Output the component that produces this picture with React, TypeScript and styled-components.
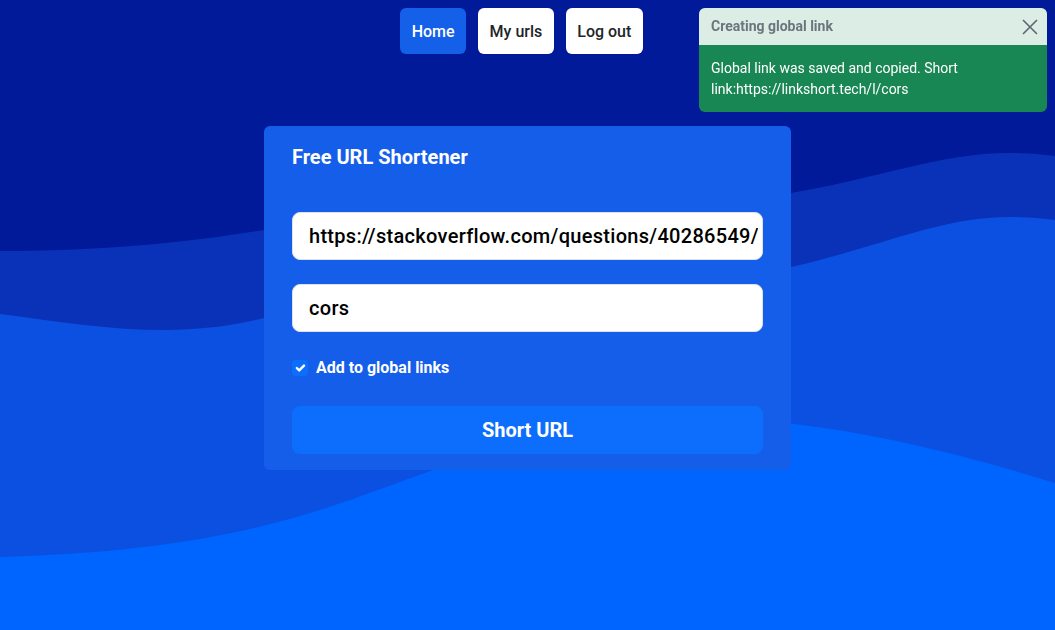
import React from "react";
import styled, { createGlobalStyle } from "styled-components";

const waves = `<svg xmlns="http://www.w3.org/2000/svg" viewBox="0 0 1055 630" preserveAspectRatio="none">
<rect width="1055" height="630" fill="#001a99"/>
<path fill="#0a32b9" d="M0 251 C120 251 200 240 264 230 C500 200 650 215 791 193 C880 178 940 153 1009 153 C1030 153 1045 155 1055 156 L1055 630 L0 630 Z"/>
<path fill="#0b50e0" d="M0 314 C60 322 120 331 170 330 C210 329 240 324 264 318 C450 280 650 300 791 267 C880 247 940 217 1009 217 C1030 217 1045 219 1055 220 L1055 630 L0 630 Z"/>
<path fill="#0064ff" d="M0 557 C150 553 250 535 350 500 C450 465 550 420 700 418 C820 418 950 450 1055 483 L1055 630 L0 630 Z"/>
</svg>`;

const checkMark = `<svg xmlns="http://www.w3.org/2000/svg" viewBox="0 0 20 20"><path fill="none" stroke="#fff" stroke-linecap="round" stroke-linejoin="round" stroke-width="3" d="m6 10 3 3 6-6"/></svg>`;

const GlobalStyle = createGlobalStyle`
  * { box-sizing: border-box; }
  html, body { margin: 0; padding: 0; }
  body {
    min-height: 100vh;
    font-family: Roboto, "Liberation Sans", sans-serif;
    background: #001a99 url("data:image/svg+xml,${encodeURIComponent(waves)}") no-repeat;
    background-size: 100% 100%;
  }
`;

const Page = styled.div`
  min-height: 100vh;
  display: flex;
  flex-direction: column;
  align-items: center;
  padding-top: 8px;
`;

const Nav = styled.nav`
  display: flex;
  gap: 12px;
  padding-right: 12px;
`;

const NavButton = styled.button<{ $active?: boolean }>`
  font-family: inherit;
  font-size: 16px;
  font-weight: 500;
  line-height: 24px;
  padding: 12px 11.5px 10px;
  border: none;
  border-radius: 6px;
  cursor: pointer;
  background: ${(p) => (p.$active ? "#1460e9" : "#ffffff")};
  color: ${(p) => (p.$active ? "#ffffff" : "#212529")};
`;

const Card = styled.form`
  margin-top: 72px;
  width: 527px;
  background: #155ee9;
  border-radius: 6px;
  padding: 19px 28px 16px;
  display: flex;
  flex-direction: column;
`;

const Title = styled.h1`
  margin: 0 0 43px;
  font-size: 20px;
  line-height: 24px;
  font-weight: 700;
  color: #ffffff;
`;

const Input = styled.input`
  width: 100%;
  height: 48px;
  padding: 8px 4px 8px 16px;
  font-family: inherit;
  font-size: 20px;
  font-weight: 500;
  letter-spacing: 0.3px;
  color: #000;
  background: #fff;
  border: 1px solid #dee2e6;
  border-radius: 8px;
  outline: none;
  margin-bottom: 24px;
`;

const CheckRow = styled.label`
  display: flex;
  align-items: center;
  gap: 8px;
  margin: 0 0 26px;
  font-size: 16px;
  font-weight: 700;
  color: #fff;
  line-height: 24px;
  cursor: pointer;
`;

const CheckBox = styled.input`
  appearance: none;
  margin: 0;
  width: 16px;
  height: 16px;
  border-radius: 4px;
  background: #0d6efd url("data:image/svg+xml,${encodeURIComponent(checkMark)}") center / 100% no-repeat;
`;

const SubmitButton = styled.button`
  height: 48px;
  border: none;
  border-radius: 8px;
  background: #0d6efd;
  color: #fff;
  font-family: inherit;
  font-size: 20px;
  font-weight: 700;
  cursor: pointer;
`;

const Toast = styled.div`
  position: fixed;
  top: 8px;
  right: 8px;
  width: 348px;
  border-radius: 6px;
  overflow: hidden;
  background: #198754;
  font-size: 14px;
  line-height: 21px;
`;

const ToastHeader = styled.div`
  display: flex;
  align-items: center;
  justify-content: space-between;
  padding: 8px 8px 8px 12px;
  background: rgba(255, 255, 255, 0.85);
  color: #6c757d;
  font-weight: 700;
`;

const CloseButton = styled.button`
  display: flex;
  padding: 0;
  border: none;
  background: none;
  color: #5d6670;
  cursor: pointer;
`;

const ToastBody = styled.div`
  padding: 13px 12px 12px;
  color: #fff;
`;

export default function App() {
  return (
    <>
      <GlobalStyle />
      <Page>
        <Nav>
          <NavButton $active>Home</NavButton>
          <NavButton>My urls</NavButton>
          <NavButton>Log out</NavButton>
        </Nav>
        <Card onSubmit={(e) => e.preventDefault()}>
          <Title>Free URL Shortener</Title>
          <Input readOnly value="https://stackoverflow.com/questions/40286549/" />
          <Input readOnly value="cors" />
          <CheckRow>
            <CheckBox type="checkbox" defaultChecked />
            Add to global links
          </CheckRow>
          <SubmitButton type="submit">Short URL</SubmitButton>
        </Card>
      </Page>
      <Toast>
        <ToastHeader>
          Creating global link
          <CloseButton aria-label="Close">
            <svg width="18" height="18" viewBox="0 0 18 18">
              <path d="M2 2 16 16 M16 2 2 16" stroke="currentColor" strokeWidth="1.6" />
            </svg>
          </CloseButton>
        </ToastHeader>
        <ToastBody>Global link was saved and copied. Short link:https://linkshort.tech/l/cors</ToastBody>
      </Toast>
    </>
  );
}
